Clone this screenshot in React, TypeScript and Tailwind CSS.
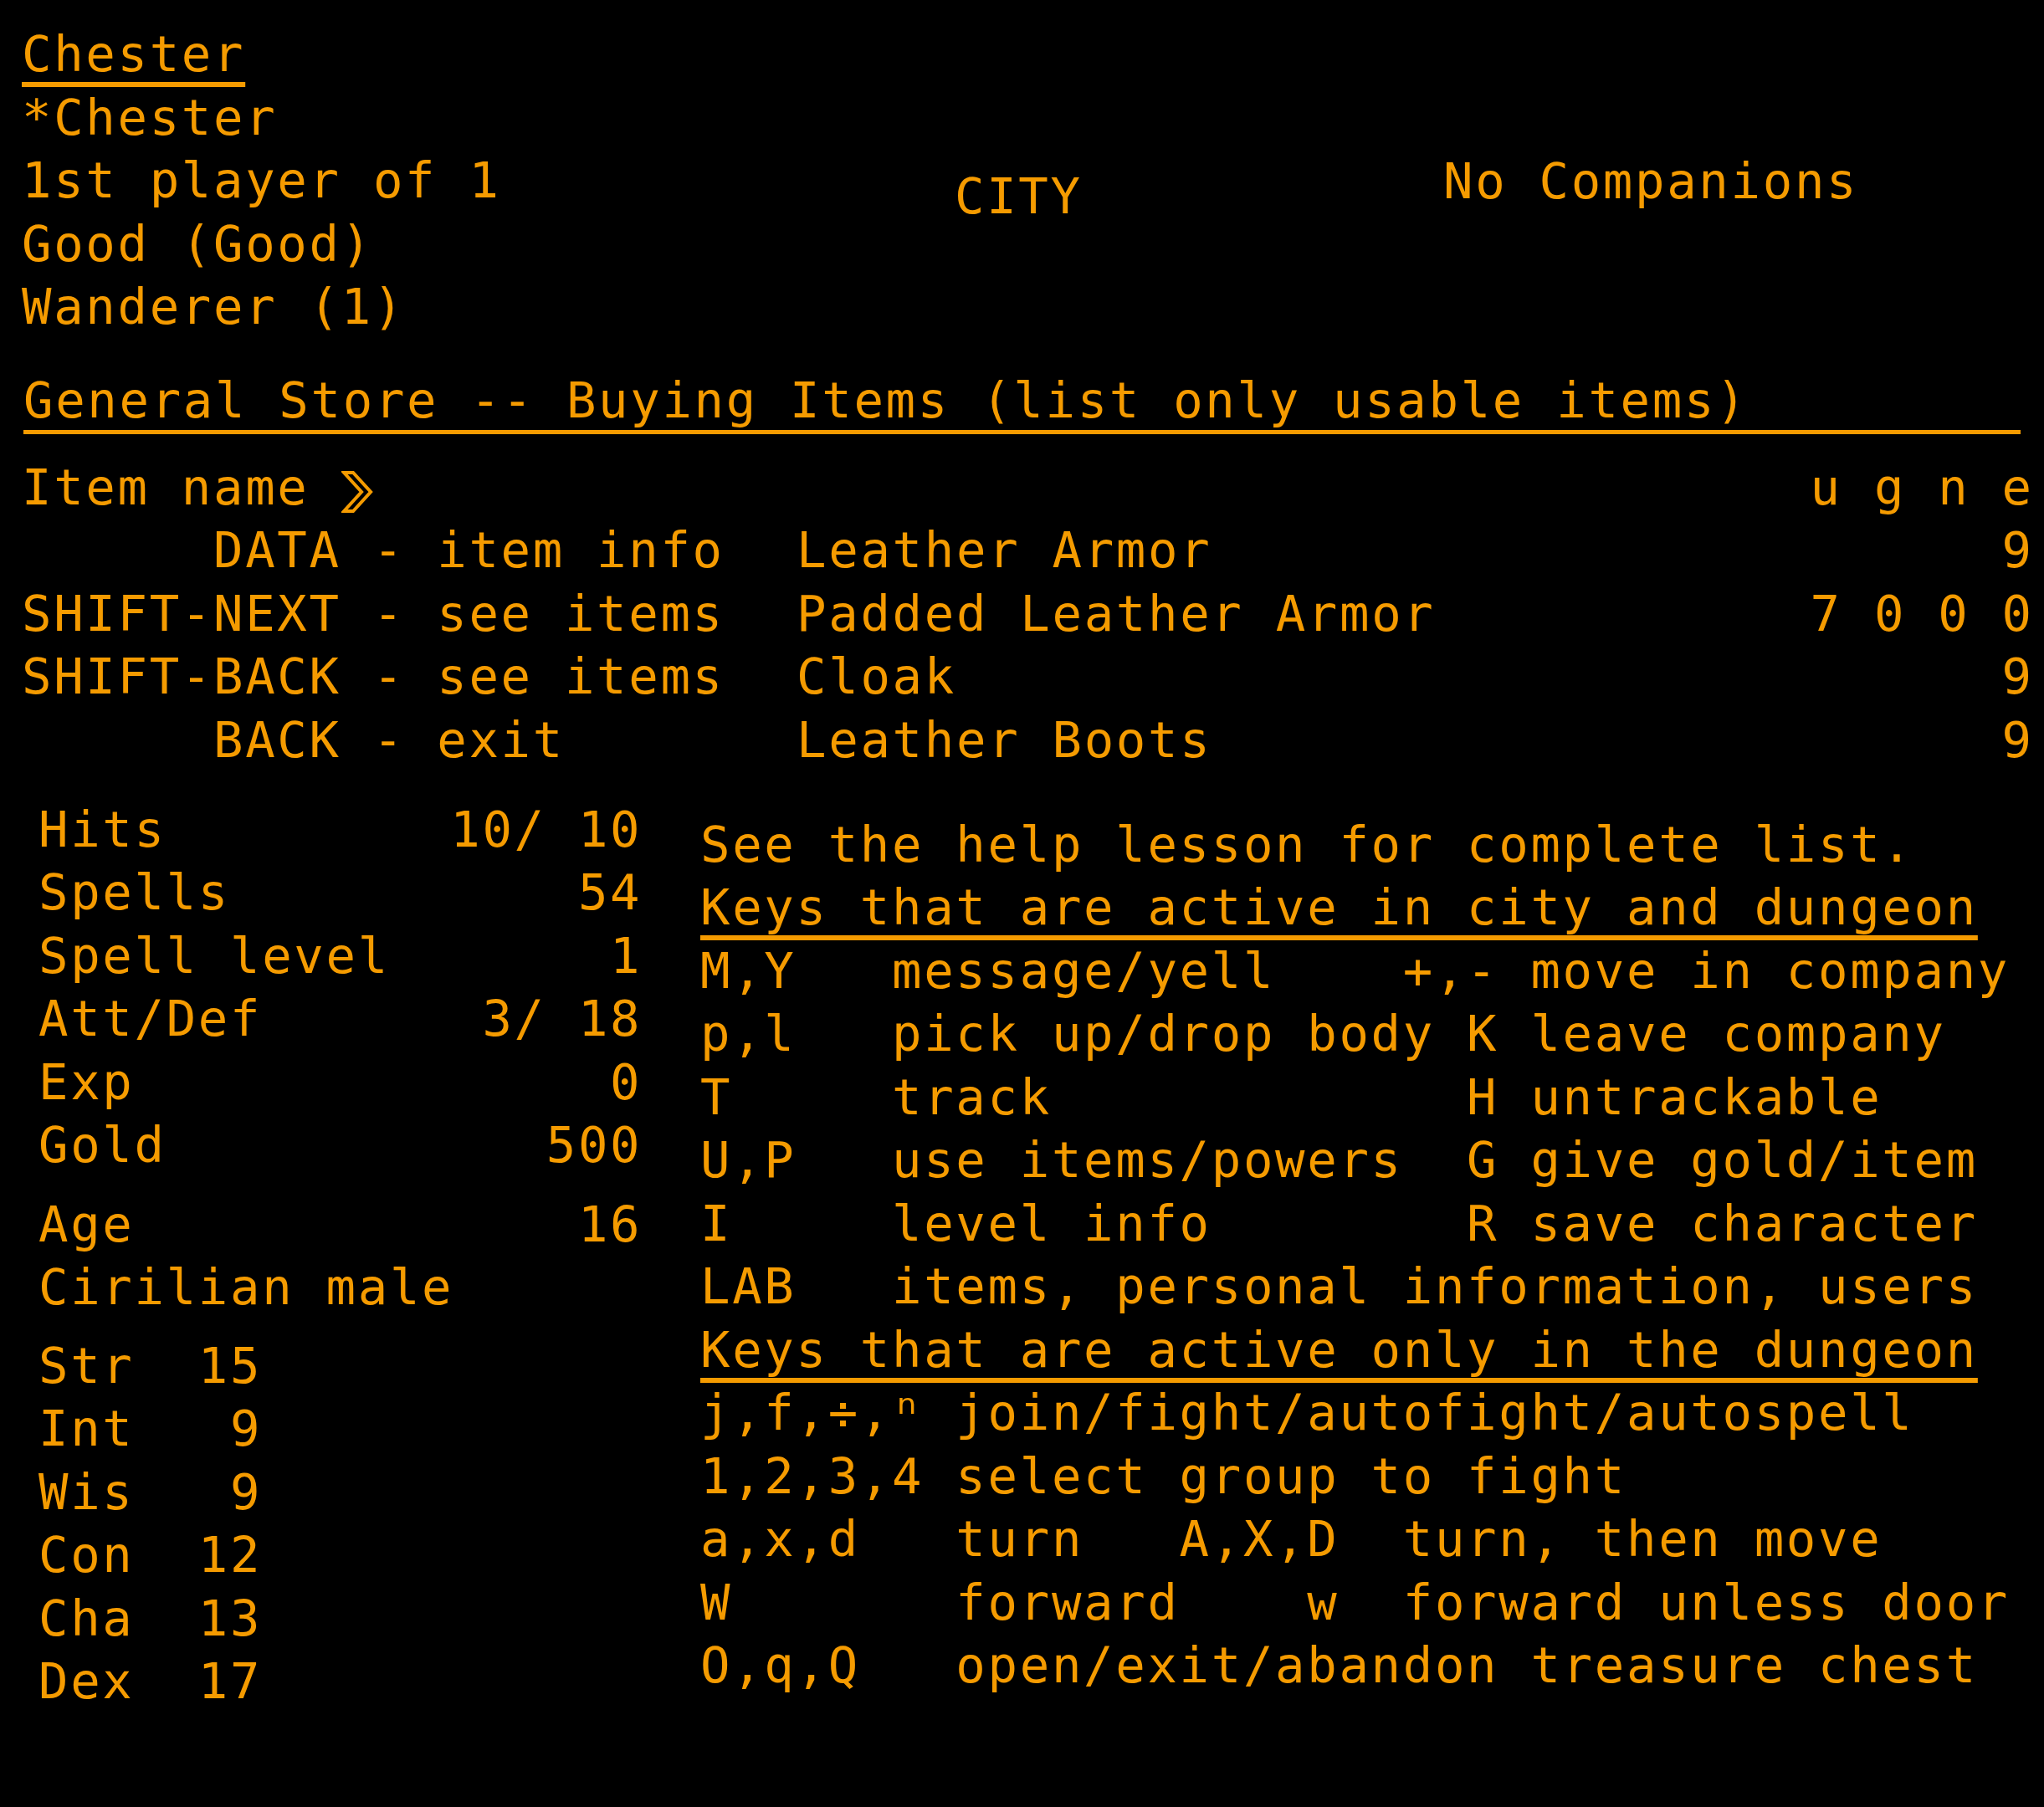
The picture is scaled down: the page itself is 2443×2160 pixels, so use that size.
import React from 'react';

const topLines = ['*Chester', '1st player of 1', 'Good (Good)', 'Wanderer (1)'];

const items = [
  { key: '      DATA - item info', name: 'Leather Armor', stats: '      9' },
  { key: 'SHIFT-NEXT - see items', name: 'Padded Leather Armor', stats: '7 0 0 0' },
  { key: 'SHIFT-BACK - see items', name: 'Cloak', stats: '      9' },
  { key: '      BACK - exit', name: 'Leather Boots', stats: '      9' },
];

const stats = [
  ['Hits', '10/ 10'],
  ['Spells', '54'],
  ['Spell level', '1'],
  ['Att/Def', '3/ 18'],
  ['Exp', '0'],
  ['Gold', '500'],
];

const attrs = [
  ['Str', '15'],
  ['Int', '9'],
  ['Wis', '9'],
  ['Con', '12'],
  ['Cha', '13'],
  ['Dex', '17'],
];

const cityKeys = [
  'M,Y   message/yell    +,- move in company',
  'p,l   pick up/drop body K leave company',
  'T     track             H untrackable',
  'U,P   use items/powers  G give gold/item',
  'I     level info        R save character',
  'LAB   items, personal information, users',
];

const dungeonKeys = [
  'j,f,÷,ⁿ join/fight/autofight/autospell',
  '1,2,3,4 select group to fight',
  'a,x,d   turn   A,X,D  turn, then move',
  'W       forward    w  forward unless door',
  'O,q,Q   open/exit/abandon treasure chest',
];

const Row = ({ children }: { children: React.ReactNode }) => <div className="h-[75.5px]">{children}</div>;

const Heading = ({ text }: { text: string }) => (
  <div className="h-[75.5px]">
    <span className="underline decoration-[6px] underline-offset-[13px]">{text}</span>
  </div>
);

// PLATO style hollow arrow prompt
const Arrow = () => (
  <svg viewBox="0 0 38 75.5" className="inline-block align-top w-[38.17px] h-[75.5px]">
    <polygon points="3,20 14,20 35,43 14,66 3,66 24,43" fill="none" stroke="#f59b00" strokeWidth="4" strokeLinejoin="miter" />
  </svg>
);

export default function App() {
  return (
    <div className="w-[2443px] h-[2160px] overflow-hidden bg-black text-[#f59b00] font-['DejaVu_Sans_Mono',monospace] text-[59px] leading-[75.5px] tracking-[2.65px] whitespace-pre">
      {/* player header */}
      <div className="flex">
        <div className="w-[1141px] pl-[26px] pt-[27px]">
          <Heading text="Chester" />
          {topLines.map((t) => (
            <Row key={t}>{t}</Row>
          ))}
        </div>
        <div className="w-[584px] pt-[197px]">
          <Row>CITY</Row>
        </div>
        <div className="pt-[179px]">
          <Row>No Companions</Row>
        </div>
      </div>

      {/* store title */}
      <div className="ml-[28px] mr-[28px] mt-[36px] h-[78px] border-b-[5px] border-[#f59b00]">
        General Store -- Buying Items (list only usable items)
      </div>

      {/* item list */}
      <div className="pl-[26px] mt-[26px]">
        <Row>
          {'Item name '}
          <Arrow />
          {' '.repeat(45) + 'u g n e'}
        </Row>
        {items.map((it) => (
          <Row key={it.name}>
            {it.key.padEnd(24)}
            <span className="ml-[10px]">{it.name.padEnd(32)}</span>
            <span className="-ml-[10px]">{it.stats}</span>
          </Row>
        ))}
      </div>

      {/* stats and key help */}
      <div className="flex">
        <div className="w-[837px] pl-[46px] pt-[31.5px]">
          {stats.map(([label, v]) => (
            <Row key={label}>
              {label}
              <span className="-ml-[4px]">{' '.repeat(19 - v.length - label.length) + v}</span>
            </Row>
          ))}
          <div className="mt-[19px]">
            <Row>
              Age<span className="-ml-[4px]">{' '.repeat(14) + '16'}</span>
            </Row>
            <Row>Cirilian male</Row>
          </div>
          <div className="mt-[18px]">
            {attrs.map(([label, v]) => (
              <Row key={label}>{label.padEnd(7 - v.length) + v}</Row>
            ))}
          </div>
        </div>
        <div className="flex-1 pt-[49.5px]">
          <Row>See the help lesson for complete list.</Row>
          <Heading text="Keys that are active in city and dungeon" />
          {cityKeys.map((k) => (
            <Row key={k}>{k}</Row>
          ))}
          <Heading text="Keys that are active only in the dungeon" />
          {dungeonKeys.map((k) => (
            <Row key={k}>{k}</Row>
          ))}
        </div>
      </div>
    </div>
  );
}
